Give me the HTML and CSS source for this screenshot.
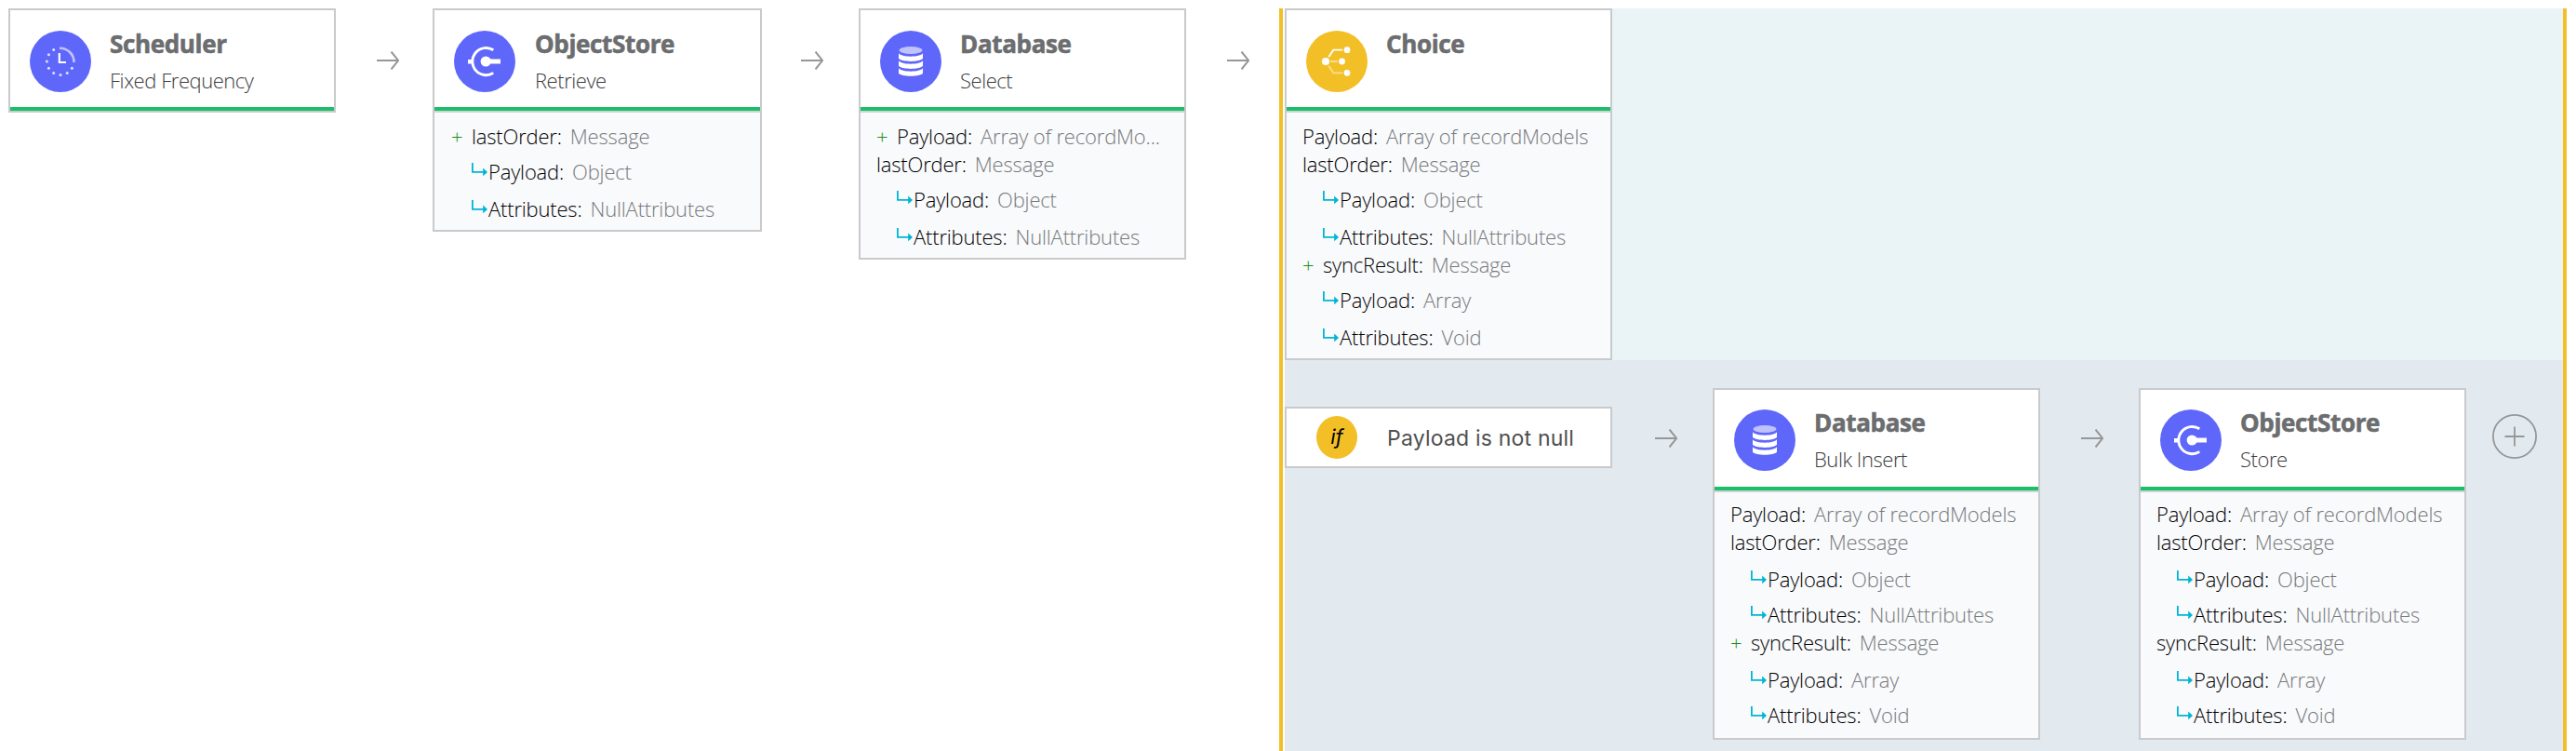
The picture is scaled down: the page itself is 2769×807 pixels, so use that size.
FILE: index.html
```html
<!DOCTYPE html>
<html lang="en">
<head>
<meta charset="utf-8">
<title>Flow</title>
<link rel="stylesheet" href="styles.css">
</head>
<body>
<svg class="defs" aria-hidden="true">
  <symbol id="scheduler" viewBox="0 0 66 66">
    <circle cx="33" cy="33" r="33" fill="#5f67fb"/>
    <path d="M32 18.7A15 15 0 0 1 47.5 34" fill="none" stroke="#bfc2fd" stroke-width="2.6"/>
    <path d="M31.8 24V34H39" fill="none" stroke="#fff" stroke-width="2.2"/>
    <g fill="#dfe0fe"><circle cx="25.7" cy="20.4" r="1.5"/><circle cx="20.4" cy="25.7" r="1.5"/><circle cx="18.4" cy="33" r="1.5"/><circle cx="20.4" cy="40.2" r="1.5"/><circle cx="25.7" cy="45.4" r="1.5"/><circle cx="33" cy="47.4" r="1.5"/><circle cx="40.2" cy="45.4" r="1.5"/><circle cx="45.4" cy="40.2" r="1.5"/></g>
  </symbol>
  <symbol id="store" viewBox="0 0 66 66">
    <circle cx="33" cy="33" r="33" fill="#5f67fb"/>
    <path d="M42.3 20.8A14.6 14.6 0 1 0 42.3 45.4" fill="none" stroke="#fff" stroke-width="2.9"/>
    <path d="M15 31H20V35.4H15ZM34 30.4H50V35.6H34Z" fill="#fff"/>
    <circle cx="34.2" cy="33" r="5.6" fill="#fff"/>
  </symbol>
  <symbol id="database" viewBox="0 0 66 66">
    <circle cx="33" cy="33" r="33" fill="#5f67fb"/>
    <ellipse cx="33" cy="21" rx="12.4" ry="4" fill="#bfc2fd"/>
    <g fill="#fff">
      <path d="M20 24.3C23 28.8 43 28.8 46 24.3V29.8C43 33.9 23 33.9 20 29.8Z"/>
      <path d="M20 32.3C23 36.8 43 36.8 46 32.3V37.8C43 41.9 23 41.9 20 37.8Z"/>
      <path d="M20 40.3C23 44.8 43 44.8 46 40.3V45.8C43 49.7 23 49.7 20 45.8Z"/>
    </g>
  </symbol>
  <symbol id="choice" viewBox="0 0 66 66">
    <circle cx="33" cy="33" r="33" fill="#f3bf26"/>
    <g fill="none" stroke="#fff" stroke-width="1.9">
      <path d="M24.3 28.3L29.3 20.6H39"/>
      <path d="M26 33H33.7M24.3 37.7L29.3 45.4H39" opacity=".5"/>
    </g>
    <g fill="#fff"><circle cx="21" cy="33" r="4.1"/><circle cx="44" cy="20.7" r="3.4"/><circle cx="38.5" cy="33" r="3.4"/><circle cx="44" cy="45.3" r="3.4"/></g>
  </symbol>
  <symbol id="arrow" viewBox="0 0 24 20">
    <path d="M0 10H23.4M15.5 .5L23.2 10L15.5 19.5" fill="none" stroke="#979797" stroke-width="2"/>
  </symbol>
  <symbol id="elbow" viewBox="0 0 17 15">
    <path d="M.9 0V9.9H13" fill="none" stroke="#00b5d6" stroke-width="1.8"/>
    <path d="M12.2 5.5L17 9.9L12.2 14.3Z" fill="#00b5d6"/>
  </symbol>
</svg>

<main class="flow">
  <article class="card">
    <header class="head"><svg class="icon"><use href="#scheduler"/></svg><div><h2>Scheduler</h2><p>Fixed Frequency</p></div></header>
  </article>
  <div class="link"><svg class="arrow"><use href="#arrow"/></svg></div>
  <article class="card wide">
    <header class="head"><svg class="icon"><use href="#store"/></svg><div><h2>ObjectStore</h2><p>Retrieve</p></div></header>
    <ul class="meta">
      <li><i>+</i><b>lastOrder:</b><span>Message</span></li>
      <li class="sub"><svg><use href="#elbow"/></svg><b>Payload:</b><span>Object</span></li>
      <li class="sub last"><svg><use href="#elbow"/></svg><b>Attributes:</b><span>NullAttributes</span></li>
    </ul>
  </article>
  <div class="link after-wide"><svg class="arrow"><use href="#arrow"/></svg></div>
  <article class="card">
    <header class="head"><svg class="icon"><use href="#database"/></svg><div><h2>Database</h2><p>Select</p></div></header>
    <ul class="meta">
      <li><i>+</i><b>Payload:</b><span>Array of recordMo...</span></li>
      <li><b>lastOrder:</b><span>Message</span></li>
      <li class="sub"><svg><use href="#elbow"/></svg><b>Payload:</b><span>Object</span></li>
      <li class="sub last"><svg><use href="#elbow"/></svg><b>Attributes:</b><span>NullAttributes</span></li>
    </ul>
  </article>
  <div class="link to-scope"><svg class="arrow"><use href="#arrow"/></svg></div>

  <section class="scope">
    <div class="router">
      <article class="card">
        <header class="head"><svg class="icon"><use href="#choice"/></svg><div><h2>Choice</h2></div></header>
        <ul class="meta">
          <li><b>Payload:</b><span>Array of recordModels</span></li>
          <li><b>lastOrder:</b><span>Message</span></li>
          <li class="sub"><svg><use href="#elbow"/></svg><b>Payload:</b><span>Object</span></li>
          <li class="sub last"><svg><use href="#elbow"/></svg><b>Attributes:</b><span>NullAttributes</span></li>
          <li><i>+</i><b>syncResult:</b><span>Message</span></li>
          <li class="sub"><svg><use href="#elbow"/></svg><b>Payload:</b><span>Array</span></li>
          <li class="sub last"><svg><use href="#elbow"/></svg><b>Attributes:</b><span>Void</span></li>
        </ul>
      </article>
    </div>
    <div class="branch">
      <div class="condition"><em>if</em><span>Payload is not null</span></div>
      <div class="link from-condition"><svg class="arrow"><use href="#arrow"/></svg></div>
      <article class="card">
        <header class="head"><svg class="icon"><use href="#database"/></svg><div><h2>Database</h2><p>Bulk Insert</p></div></header>
        <ul class="meta">
          <li><b>Payload:</b><span>Array of recordModels</span></li>
          <li><b>lastOrder:</b><span>Message</span></li>
          <li class="sub"><svg><use href="#elbow"/></svg><b>Payload:</b><span>Object</span></li>
          <li class="sub last"><svg><use href="#elbow"/></svg><b>Attributes:</b><span>NullAttributes</span></li>
          <li><i>+</i><b>syncResult:</b><span>Message</span></li>
          <li class="sub"><svg><use href="#elbow"/></svg><b>Payload:</b><span>Array</span></li>
          <li class="sub last"><svg><use href="#elbow"/></svg><b>Attributes:</b><span>Void</span></li>
        </ul>
      </article>
      <div class="link"><svg class="arrow"><use href="#arrow"/></svg></div>
      <article class="card">
        <header class="head"><svg class="icon"><use href="#store"/></svg><div><h2>ObjectStore</h2><p>Store</p></div></header>
        <ul class="meta">
          <li><b>Payload:</b><span>Array of recordModels</span></li>
          <li><b>lastOrder:</b><span>Message</span></li>
          <li class="sub"><svg><use href="#elbow"/></svg><b>Payload:</b><span>Object</span></li>
          <li class="sub last"><svg><use href="#elbow"/></svg><b>Attributes:</b><span>NullAttributes</span></li>
          <li><b>syncResult:</b><span>Message</span></li>
          <li class="sub"><svg><use href="#elbow"/></svg><b>Payload:</b><span>Array</span></li>
          <li class="sub last"><svg><use href="#elbow"/></svg><b>Attributes:</b><span>Void</span></li>
        </ul>
      </article>
      <svg class="add" viewBox="0 0 48 48"><circle cx="24" cy="24" r="23.1"/><path d="M13.5 24H34.5M24 13.5V34.5"/></svg>
    </div>
  </section>
</main>
</body>
</html>
```
FILE: styles.css
```css
* { box-sizing: border-box; margin: 0; padding: 0; }
body { background: #fff; font-family: "Open Sans", sans-serif; overflow: hidden; }
.defs { display: none; }

.flow { display: flex; align-items: flex-start; height: 807px; padding: 9px 0 0 9px; }

.card { flex: none; width: 352px; border: 2px solid #c9cacc; background: #f9fafc; }
.card.wide { width: 354px; }
.head { display: flex; height: 108px; padding: 22px 0 0 21px; background: #fff; border-bottom: 4px solid #1bbf69; }
.icon { flex: none; width: 66px; height: 66px; margin-right: 20px; }
.wide .icon { margin-right: 21px; }
.head h2 { font-size: 26px; line-height: 36px; font-weight: 700; letter-spacing: -.35px; color: #6b6d6f; -webkit-text-stroke: .6px #6b6d6f; margin-top: -4px; white-space: nowrap; }
.head p { font-size: 22px; line-height: 30px; font-weight: 300; letter-spacing: -.45px; color: #3c3c3c; margin: 6px 0 0 0; white-space: nowrap; }

.meta { list-style: none; border-top: 2px solid #d0d2d4; padding: 10px 0 8px 17px; }
.meta li { display: flex; align-items: flex-end; height: 30px; font-size: 22px; line-height: 30px; font-weight: 300; letter-spacing: -.18px; white-space: nowrap; }
.meta i { width: 22px; font-style: normal; color: #1e8c1e; }
.meta b { font-weight: 300; color: #000; margin-right: 9px; }
.meta span { color: #77797b; }
.meta .sub { height: 38px; padding-left: 22px; }
.meta .sub.last { height: 40px; }
.meta svg { flex: none; width: 17px; height: 15px; margin: 0 1px 9px 0; }
.wide .meta { padding-left: 18px; }

.link { flex: none; width: 104px; padding: 46px 0 0 44px; }
.link.after-wide { padding-left: 42px; }
.link.to-scope { width: 100px; }
.arrow { display: block; width: 24px; height: 20px; }

.scope { flex: none; display: flex; flex-direction: column; width: 1384px; height: 798px; padding-left: 2px; border: solid #f3bf26; border-width: 0 4px; }
.router { display: flex; height: 378px; background: #eaf3f6; }
.branch { flex: 1; display: flex; align-items: flex-start; padding-top: 30px; background: #e2eaf0; }
.condition { flex: none; display: flex; align-items: center; width: 352px; height: 66px; margin-top: 20px; padding-left: 32px; background: #fff; border: 2px solid #c9cacc; }
.condition em { width: 44px; height: 46px; border-radius: 50%; background: #f3bf26; font: italic 400 22px/44px "Inter", sans-serif; text-align: center; color: #000; }
.condition span { margin-left: 32px; font: 400 23px/30px "Inter", sans-serif; letter-spacing: .2px; color: #505050; padding-top: 1px; white-space: nowrap; }
.branch .link { width: 106px; padding-top: 44px; }
.branch .link.from-condition { width: 108px; padding-left: 46px; }
.branch .head { padding-top: 21px; }
.branch .meta { padding: 8px 0 10px 17px; }
.branch .sub { height: 40px; }
.branch .sub.last { height: 38px; }
.add { flex: none; width: 48px; height: 48px; margin: 28px 0 0 28px; fill: none; stroke: #979797; stroke-width: 1.8; }
```
